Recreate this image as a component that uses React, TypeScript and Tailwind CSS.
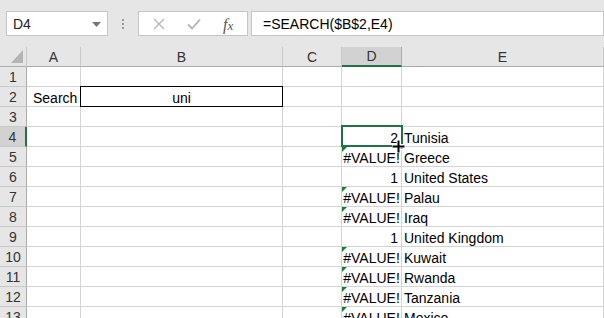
import type { ReactNode } from 'react';

const font = { fontFamily: '"Liberation Sans", Arial, sans-serif' };

const cols = ['A', 'B', 'C', 'D', 'E'];
const widths = ['w-[54px]', 'w-[202px]', 'w-[59px]', 'w-[60px]', 'flex-1'];

type Row = { d?: string; e?: string };

const data: Record<number, Row> = {
  4: { d: '2', e: 'Tunisia' },
  5: { d: '#VALUE!', e: 'Greece' },
  6: { d: '1', e: 'United States' },
  7: { d: '#VALUE!', e: 'Palau' },
  8: { d: '#VALUE!', e: 'Iraq' },
  9: { d: '1', e: 'United Kingdom' },
  10: { d: '#VALUE!', e: 'Kuwait' },
  11: { d: '#VALUE!', e: 'Rwanda' },
  12: { d: '#VALUE!', e: 'Tanzania' },
  13: { d: '#VALUE!', e: 'Mexico' },
};

function Cell({ w, children, className = '' }: { w: string; children?: ReactNode; className?: string }) {
  return (
    <div className={`relative h-full shrink-0 border-r border-b border-[#d4d4d4] text-[14px] leading-[22px] text-black ${w} ${className}`}>
      {children}
    </div>
  );
}

function ErrorMark() {
  return (
    <svg className="absolute left-0 top-0" width="5" height="5" viewBox="0 0 5 5">
      <polygon points="0,0 5,0 0,5" fill="#1e7b34" />
    </svg>
  );
}

function Toolbar() {
  return (
    <div className="relative h-[47px] bg-[#e6e6e6]">
      {/* name box */}
      <div className="absolute left-[6px] top-[11px] flex h-[25px] w-[102px] items-center border border-[#c6c6c6] bg-white pl-[6px] pt-[1px] text-[14px] text-[#222]">
        D4
        <svg className="absolute right-[6px] top-[10px]" width="9" height="5" viewBox="0 0 9 5">
          <polygon points="0,0 9,0 4.5,5" fill="#777" />
        </svg>
      </div>
      {/* separator dots */}
      <div className="absolute left-[122px] top-[19px] flex flex-col gap-[2px]">
        <span className="block h-[2px] w-[2px] bg-[#9a9a9a]" />
        <span className="block h-[2px] w-[2px] bg-[#9a9a9a]" />
        <span className="block h-[2px] w-[2px] bg-[#9a9a9a]" />
      </div>
      {/* function buttons */}
      <div className="absolute left-[138px] top-[11px] flex h-[25px] w-[110px] items-center border border-[#c6c6c6] bg-white">
        <svg className="absolute left-[14px] top-[6px]" width="12" height="12" viewBox="0 0 12 12">
          <path d="M1 1 L11 11 M11 1 L1 11" stroke="#b3b3b3" strokeWidth="1.3" />
        </svg>
        <svg className="absolute left-[48px] top-[6px]" width="14" height="12" viewBox="0 0 14 12">
          <path d="M1 6.5 L5 10.5 L13 1.5" stroke="#b3b3b3" strokeWidth="1.8" fill="none" />
        </svg>
        <span
          className="absolute left-[84px] top-[1px] text-[16px] italic text-[#555]"
          style={{ fontFamily: '"Liberation Serif", "Times New Roman", serif' }}
        >
          f<span className="text-[13px]">x</span>
        </span>
      </div>
      {/* formula */}
      <div className="absolute left-[251px] top-[11px] flex h-[25px] w-[353px] items-center border border-[#c6c6c6] bg-white pl-[11px] pt-[1px] text-[14px] text-black">
        =SEARCH($B$2,E4)
      </div>
    </div>
  );
}

function HeaderRow() {
  return (
    <div className="flex h-[20px]">
      <div className="relative h-full w-[27px] shrink-0 border-r border-b border-r-[#c8c8c8] border-b-[#ababab] bg-[#e6e6e6]">
        <svg className="absolute left-[11px] top-[3px]" width="12" height="13" viewBox="0 0 12 13">
          <polygon points="12,0 12,13 0,13" fill="#b4b4b4" />
        </svg>
      </div>
      {cols.map((c, i) => {
        const sel = c === 'D';
        return (
          <div
            key={c}
            className={`flex h-full shrink-0 items-end justify-center text-[14px] leading-[17px] text-[#333] ${widths[i]} ${
              sel
                ? 'border-r border-b-2 border-r-[#ababab] border-b-[#217346] bg-[#d2d2d2]'
                : 'border-r border-b border-r-[#c8c8c8] border-b-[#ababab] bg-[#e6e6e6]'
            }`}
          >
            {c}
          </div>
        );
      })}
    </div>
  );
}

function GridRow({ n }: { n: number }) {
  const r = data[n] ?? {};
  const isSel = n === 4;
  const isErr = r.d === '#VALUE!';
  return (
    <div className="flex h-[20px]">
      <div
        className={`flex h-full w-[27px] shrink-0 items-center justify-center border-b border-b-[#c8c8c8] pt-[2px] text-[14px] leading-[19px] text-[#333] ${
          isSel ? 'border-r-2 border-r-[#217346] bg-[#d2d2d2]' : 'border-r border-r-[#ababab] bg-[#e6e6e6]'
        }`}
      >
        {n}
      </div>
      <Cell w={widths[0]} className="pl-[6px]">
        {n === 2 ? 'Search' : null}
      </Cell>
      <Cell w={widths[1]}>
        {n === 2 ? (
          <div className="absolute -left-[1px] -top-[1px] h-[21px] w-[203px] border border-black text-center leading-[22px]">uni</div>
        ) : null}
      </Cell>
      <Cell w={widths[2]} />
      <Cell w={widths[3]} className={isErr ? 'text-center text-[13px]' : 'pr-[3px] text-right'}>
        {isErr && <ErrorMark />}
        <span className="relative z-0">{r.d}</span>
        {isSel && (
          <>
            <div className="absolute -left-[1px] -top-[2px] z-10 h-[22px] w-[62px] border-2 border-[#217346]" />
            <div className="absolute left-[56px] top-[17px] z-10 h-[6px] w-[6px] border border-white bg-[#217346]" />
            <svg className="absolute left-[49px] top-[12px] z-20" width="15" height="15" viewBox="0 0 15 15">
              <path d="M7.5 1 V14 M1 7.5 H14" stroke="#fff" strokeWidth="4" />
              <path d="M7.5 1.5 V13.5 M1.5 7.5 H13.5" stroke="#000" strokeWidth="2" />
            </svg>
          </>
        )}
      </Cell>
      <Cell w={widths[4]} className="pl-[2px]">
        {r.e}
      </Cell>
    </div>
  );
}

export default function App() {
  return (
    <div className="h-[318px] w-[604px] overflow-hidden bg-white" style={font}>
      <Toolbar />
      <HeaderRow />
      {Array.from({ length: 13 }, (_, i) => (
        <GridRow key={i + 1} n={i + 1} />
      ))}
    </div>
  );
}
